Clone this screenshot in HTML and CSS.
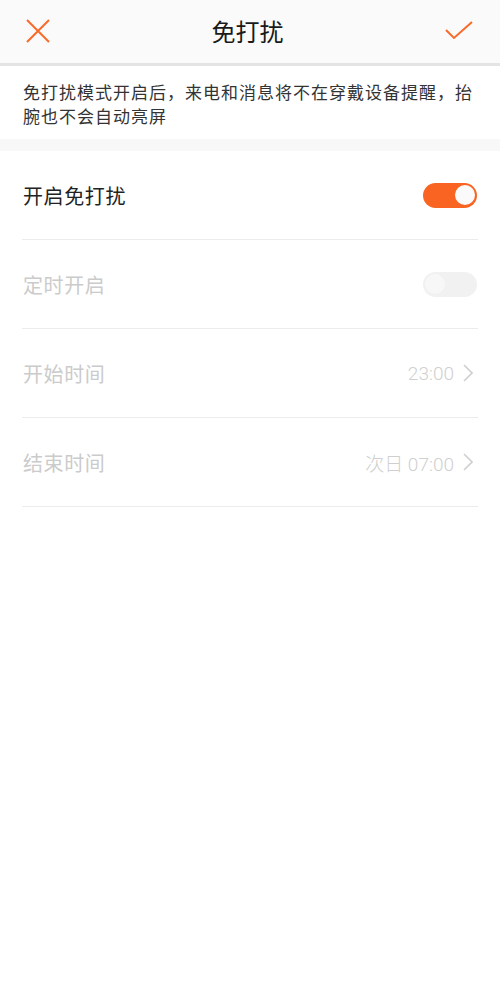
FILE: index.html
```html
<!DOCTYPE html>
<html lang="zh-CN">
<head>
    <meta charset="UTF-8">
    <meta name="viewport" content="width=device-width, initial-scale=1.0">
    <title>免打扰</title>
    <link rel="stylesheet" href="styles.css">
</head>
<body>
    <header class="topbar">
        <button class="icon-btn" aria-label="关闭">
            <svg width="24" height="24" viewBox="0 0 24 24"><path d="M1 1L23 23M23 1L1 23" stroke="#f96a2a" stroke-width="2" fill="none"/></svg>
        </button>
        <h1 class="title">免打扰</h1>
        <button class="icon-btn" aria-label="确定">
            <svg width="30" height="20" viewBox="0 0 30 20"><path d="M1 9L9 17L27 1" stroke="#f96a2a" stroke-width="2" fill="none"/></svg>
        </button>
    </header>

    <div class="desc">
        <p>免打扰模式开启后，来电和消息将不在穿戴设备提醒，抬腕也不会自动亮屏</p>
    </div>

    <ul class="list">
        <li class="row">
            <span class="label">开启免打扰</span>
            <span class="switch on"><span class="knob"></span></span>
        </li>
        <li class="row disabled">
            <span class="label">定时开启</span>
            <span class="switch off"><span class="knob"></span></span>
        </li>
        <li class="row disabled">
            <span class="label">开始时间</span>
            <span class="value">23:00
                <svg width="10" height="18" viewBox="0 0 10 18"><path d="M1 1L9 9L1 17" stroke="#cfcfcf" stroke-width="1.6" fill="none"/></svg>
            </span>
        </li>
        <li class="row disabled">
            <span class="label">结束时间</span>
            <span class="value">次日 07:00
                <svg width="10" height="18" viewBox="0 0 10 18"><path d="M1 1L9 9L1 17" stroke="#cfcfcf" stroke-width="1.6" fill="none"/></svg>
            </span>
        </li>
    </ul>
</body>
</html>
```

FILE: styles.css
```css
*{
    margin: 0;
    padding: 0;
    box-sizing: border-box;
}

body{
    background-color: #fff;
    font-family: Roboto, "Noto Sans CJK SC", sans-serif;
    color: #222;
}

.topbar{
    height: 66px;
    background-color: #fafafa;
    border-bottom: 3px solid #e4e4e4;
    display: flex;
    align-items: center;
    justify-content: space-between;
    padding: 0 25px 2px 26px;
}
.icon-btn{
    border: none;
    background: none;
    display: flex;
}
.title{
    font-size: 24px;
    font-weight: normal;
    color: #1a1a1a;
}

.desc{
    background-color: #fff;
    padding: 15px 20px 10px 23px;
    border-bottom: 12px solid #f8f8f8;
    font-size: 17px;
    line-height: 24px;
    letter-spacing: 1px;
    color: #333;
}

.list{
    list-style: none;
    padding: 0 22px;
}
.row{
    height: 89px;
    display: flex;
    align-items: center;
    justify-content: space-between;
    border-bottom: 1px solid #ececec;
    padding: 0 1px;
}
.label{
    font-size: 20px;
    letter-spacing: 0.6px;
}
.row.disabled .label{
    color: #cbcbcb;
}

.switch{
    width: 54px;
    height: 25px;
    border-radius: 13px;
    display: flex;
    align-items: center;
    padding: 0 2px;
}
.switch.on{
    background-color: #f96422;
    justify-content: flex-end;
}
.switch.off{
    background-color: #f1f1f1;
    justify-content: flex-start;
}
.knob{
    width: 20px;
    height: 20px;
    border-radius: 50%;
    background-color: #fafafa;
}
.switch.off .knob{
    background-color: #f7f7f7;
}

.value{
    display: flex;
    align-items: center;
    gap: 9px;
    padding-right: 4px;
    font-size: 19px;
    font-weight: 300;
    color: #cfcfcf;
}
```
